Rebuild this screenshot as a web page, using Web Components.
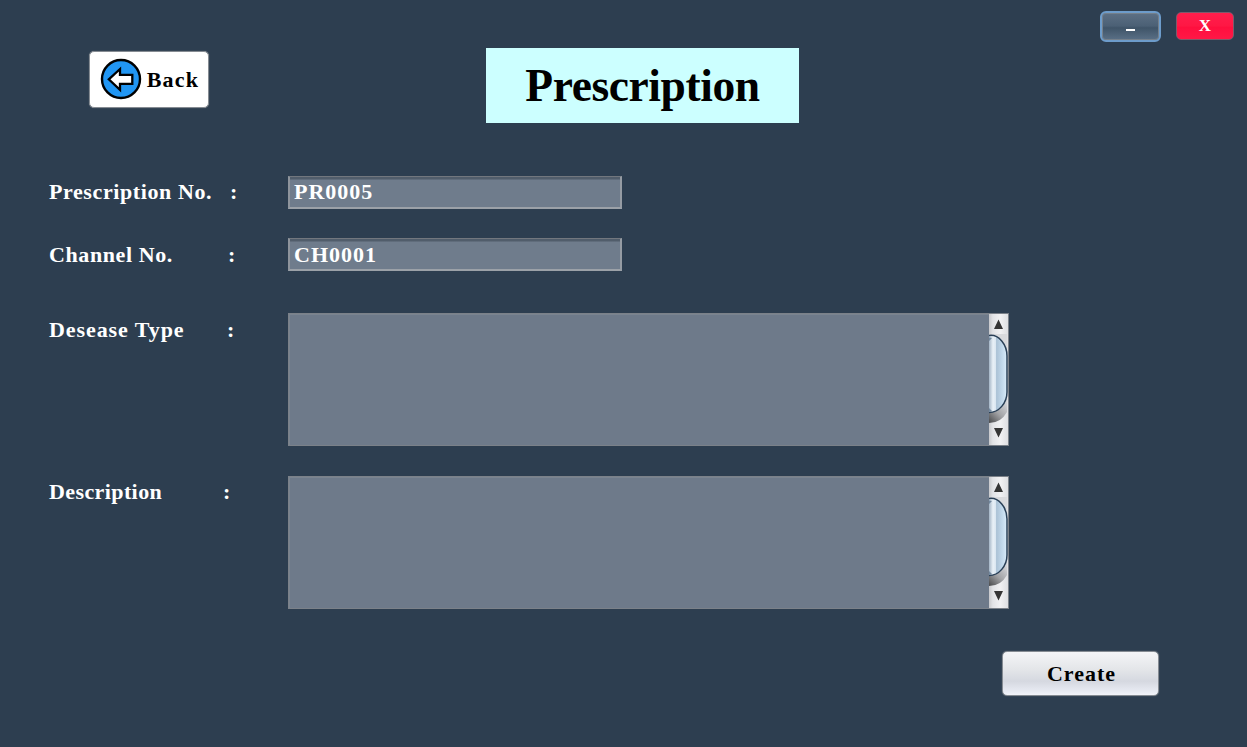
<!DOCTYPE html>
<html lang="en">
<head>
<meta charset="utf-8">
<title>Prescription</title>
<style>
html,body{margin:0;height:100%;overflow:hidden;background:#2d3e50}
</style>
</head>
<body>
<prescription-window></prescription-window>
<script>
const define = (name, html) => customElements.define(name, class extends HTMLElement {
  constructor() {
    super();
    const t = document.createElement('template');
    t.innerHTML = html;
    this.attachShadow({mode: 'open'}).append(t.content.cloneNode(true));
  }
});

define('window-button', `<style>
:host{display:flex;align-items:center;justify-content:center;box-sizing:border-box;width:58px;height:28px;border:1px solid #7d5a6c;border-radius:5px;background:linear-gradient(#ff1e4c,#ff1744 50%,#ff0f3e 55%,#ff1846);color:#fff;font:bold 17px/26px "Liberation Serif",serif}
:host([kind=min]){width:61px;height:31px;border:2px solid #6d9ccb;border-radius:6px;background:linear-gradient(#5d7085,#4b6075 48%,#3f5468 55%,#5a7086);box-shadow:inset 0 0 0 1px #75808b}
</style><slot></slot>`);

define('push-button', `<style>
:host{display:flex;align-items:center;justify-content:center;box-sizing:border-box;border:1px solid #858b92;border-radius:5px;background:linear-gradient(#f4f5f7,#e4e6e9 40%,#d5d8e0 68%,#e8ebf3 92%,#f2f4fa);color:#000;font:bold 22px/26px "Liberation Serif",serif;letter-spacing:1px;box-shadow:0 0 1px #858b92}
:host([plain]){background:#fff;letter-spacing:1.2px}
</style><slot></slot>`);

define('back-icon', `<style>:host{display:block;width:42px;height:42px;margin:-2px 5px 0 1px}svg{display:block}</style>
<svg width="42" height="42" viewBox="0 0 42 42"><circle cx="21" cy="21" r="19" fill="#2196f3" stroke="#000" stroke-width="2.4"/><path d="M8.8 21.3 L20 11 V16.8 H32.3 V25.8 H20 V31.8 Z" fill="#fff" stroke="#000" stroke-width="2.3"/></svg>`);

define('page-title', `<style>
:host{display:flex;align-items:center;justify-content:center;box-sizing:border-box;width:313px;height:75px;padding-top:1px;background:#ccffff;color:#000;font:bold 45.5px/74px "Liberation Serif",serif;letter-spacing:-.4px}
</style><slot></slot>`);

define('form-row', `<style>
:host{display:flex;align-items:flex-start;color:#fff;font:bold 22px/26px "Liberation Serif",serif}
.label{display:flex;width:239px;padding-top:var(--drop,4px)}
.name{width:var(--colon,181px);white-space:nowrap;letter-spacing:var(--track,.6px)}
</style><div class="label"><span class="name"><slot name="label"></slot></span><span>:</span></div><slot></slot>`);

define('text-box', `<style>
:host{display:block;box-sizing:border-box;width:334px;height:33px;border:2px solid;border-width:1px 2px 2px;border-color:#72777e #959ba3 #9ba1a8 #8e949c;padding:var(--inset,2px) 4px 0;background:linear-gradient(#515d6b 0,#515d6b 2px,#6f7c8c 3px);color:#fff;letter-spacing:1px;line-height:26px}
</style><slot></slot>`);

define('scroll-bar', `<style>:host{display:block;width:19px;height:131px}svg{display:block}</style>
<svg width="19" height="131" viewBox="0 0 19 131">
<defs>
<linearGradient id="track"><stop offset="0" stop-color="#c8c9cc"/><stop offset=".2" stop-color="#e2e3e6"/><stop offset=".6" stop-color="#f1f1f3"/><stop offset="1" stop-color="#dedfe2"/></linearGradient>
<linearGradient id="thumb"><stop offset="0" stop-color="#a3b4c5"/><stop offset=".22" stop-color="#e8f0f7"/><stop offset=".36" stop-color="#dde8f2"/><stop offset=".42" stop-color="#abc2d6"/><stop offset=".7" stop-color="#bfd6e9"/><stop offset="1" stop-color="#d9ecfa"/></linearGradient>
<linearGradient id="shade" x2=".7" y1="1" y2="0"><stop offset="0" stop-color="#48494b"/><stop offset=".5" stop-color="#a2a3a6"/><stop offset="1" stop-color="#d5d6da"/></linearGradient>
</defs>
<rect width="19" height="131" fill="url(#track)"/>
<path d="M0 20 H3 Q15 22 18 38 V20 Z" fill="#d9dadd"/>
<path d="M0 98 Q13 96 18 84 V98 Q12 109 0 109 Z" fill="url(#shade)"/>
<path d="M0 21.5 C10 20 18 31 18 42 V78 C18 89 10 98.5 0 98.5 Z" fill="url(#thumb)"/>
<path d="M0 21.5 C10 20 18 31 18 42 V78 C18 89 10 98.5 0 98.5" fill="none" stroke="#2a4057" stroke-width="1.5"/>
<path d="M0 23.5 L3 24 L0 27 M0 94 L3 97 L0 98 Z" fill="#72889e"/>
<path d="M5 15 L9.5 5.5 L14 15 Z M5 114 H14 L9.5 123.5 Z" fill="#353535"/>
</svg>`);

define('text-panel', `<style>
:host{display:flex;justify-content:flex-end;box-sizing:border-box;width:721px;height:133px;border:1px solid #7b8189;background:#6e7a8a;box-shadow:inset 1px 1px #7a8490}
</style><scroll-bar></scroll-bar>`);

define('prescription-window', `<style>
:host{display:flex;flex-direction:column;width:1247px;height:747px;background:#2d3e50;box-sizing:border-box}
.top{display:flex;height:42px;box-sizing:border-box;justify-content:flex-end;align-items:flex-start;gap:15px;padding:11px 13px 0 0}
.top window-button:last-child{margin-top:1px}
.head{display:flex;height:81px;align-items:flex-start}
.head push-button{width:120px;height:57px;margin:9px 277px 0 89px}
.head page-title{margin-top:6px}
.form{display:flex;flex-direction:column;padding:53px 0 0 49px}
.minus{display:block;width:9px;height:2px;background:#fff;margin-top:7px}
.end{display:flex;justify-content:flex-end;padding:42px 88px 0 0}
.end push-button{width:157px;height:45px;padding-left:2px}
</style>
<div class="top"><window-button kind="min"><span class="minus"></span></window-button><window-button>X</window-button></div>
<div class="head"><push-button plain><back-icon></back-icon>Back</push-button><page-title>Prescription</page-title></div>
<div class="form">
<form-row style="--drop:3px"><span slot="label">Prescription No.</span><text-box>PR0005</text-box></form-row>
<form-row style="--colon:179px;margin-top:29px;--drop:4px;--inset:3px"><span slot="label">Channel No.</span><text-box>CH0001</text-box></form-row>
<form-row style="--colon:178px;margin-top:42px;--drop:4px;--track:.92px"><span slot="label">Desease Type</span><text-panel></text-panel></form-row>
<form-row style="--colon:174px;margin-top:30px;--drop:3px;--track:.4px"><span slot="label">Description</span><text-panel></text-panel></form-row>
</div>
<div class="end"><push-button>Create</push-button></div>`);
</script>
</body>
</html>
